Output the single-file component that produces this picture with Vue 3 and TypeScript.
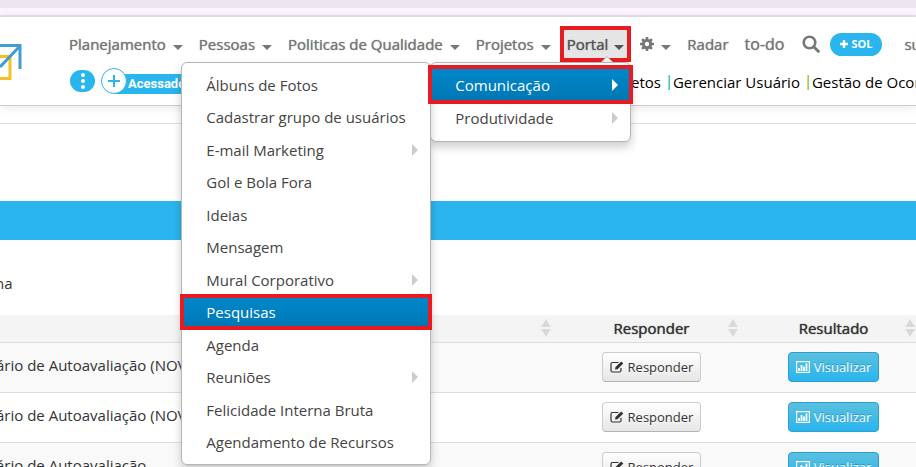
<script setup lang="ts">
interface MenuItem {
  label: string
  submenu?: boolean
  active?: boolean
}

const leadingMenus: string[] = ['Planejamento', 'Pessoas', 'Politicas de Qualidade', 'Projetos']

const portalItems: MenuItem[] = [
  { label: 'Comunicação', submenu: true, active: true },
  { label: 'Produtividade', submenu: true },
]

const communicationItems: MenuItem[] = [
  { label: 'Álbuns de Fotos' },
  { label: 'Cadastrar grupo de usuários' },
  { label: 'E-mail Marketing', submenu: true },
  { label: 'Gol e Bola Fora' },
  { label: 'Ideias' },
  { label: 'Mensagem' },
  { label: 'Mural Corporativo', submenu: true },
  { label: 'Pesquisas', active: true },
  { label: 'Agenda' },
  { label: 'Reuniões', submenu: true },
  { label: 'Felicidade Interna Bruta' },
  { label: 'Agendamento de Recursos' },
]

const surveys: string[] = ['ário de Autoavaliação (NOV', 'ário de Autoavaliação (NOV', 'ário de Autoavaliação']
</script>

<template>
  <div class="page">
    <div class="chrome"></div>
    <header class="header">
      <svg class="logo" viewBox="0 0 22 40" aria-hidden="true">
        <path d="M0 13.500H10V35.500H0" fill="none" stroke="#f6c022" stroke-width="3" />
        <path d="M0 2.500H20V26M20 3L0 24" fill="none" stroke="#3f9fd0" stroke-width="3" />
      </svg>
      <div class="bars">
        <nav class="nav">
          <a v-for="menu in leadingMenus" :key="menu" href="#" class="nav-item">{{ menu }}<i class="caret"></i></a>
          <div class="portal">
            <a href="#" class="nav-item open">Portal<i class="caret"></i></a>
            <i class="notch"></i>
            <div class="menu portal-menu">
              <a v-for="item in portalItems" :key="item.label" href="#" class="entry" :class="{ active: item.active }">
                {{ item.label }}<i v-if="item.submenu" class="arrow"></i>
              </a>
              <div class="menu side-menu">
                <a v-for="item in communicationItems" :key="item.label" href="#" class="entry" :class="{ active: item.active }">
                  {{ item.label }}<i v-if="item.submenu" class="arrow"></i>
                </a>
              </div>
            </div>
          </div>
          <a href="#" class="nav-item" aria-label="Configurações">
            <svg class="gear" viewBox="0 0 14 14" aria-hidden="true">
              <circle cx="7" cy="7" r="3.700" fill="none" stroke="currentColor" stroke-width="3" />
              <path d="M7 0V3M7 11V14M0 7H3M11 7H14M2.100 2.100L4 4M10 10L11.900 11.900M2.100 11.900L4 10M10 4L11.900 2.100" stroke="currentColor" stroke-width="2.600" />
            </svg><i class="caret"></i>
          </a>
          <a href="#" class="nav-item">Radar</a>
          <a href="#" class="nav-item todo">to-do</a>
          <button type="button" class="search" aria-label="Buscar">
            <svg viewBox="0 0 18 18" aria-hidden="true">
              <circle cx="7.500" cy="7.500" r="5.800" fill="none" stroke="currentColor" stroke-width="2.600" />
              <path d="M11.700 11.700L16.300 16.300" stroke="currentColor" stroke-width="3" stroke-linecap="round" />
            </svg>
          </button>
          <button type="button" class="sol">
            <svg viewBox="0 0 8 8" aria-hidden="true"><path d="M4 0V8M0 4H8" stroke="#fff" stroke-width="2.400" /></svg>SOL
          </button>
          <a href="#" class="support">su</a>
        </nav>
        <div class="shortcuts">
          <button type="button" class="more" aria-label="Mais opções">
            <svg viewBox="0 0 4 16" aria-hidden="true">
              <circle cx="2" cy="2" r="2" fill="#fff" /><circle cx="2" cy="8" r="2" fill="#fff" /><circle cx="2" cy="14" r="2" fill="#fff" />
            </svg>
          </button>
          <div class="accessed">
            <button type="button" class="add" aria-label="Adicionar">
              <svg viewBox="0 0 12 12" aria-hidden="true"><path d="M6 0V12M0 6H12" stroke="#29b5ee" stroke-width="2" /></svg>
            </button>
            <span class="accessed-label">Acessado</span>
          </div>
          <a href="#" class="shortcut">etos</a>
          <i class="divider"></i>
          <a href="#" class="shortcut">Gerenciar Usuário</a>
          <i class="divider warm"></i>
          <a href="#" class="shortcut">Gestão de Ocor</a>
        </div>
      </div>
    </header>

    <main class="main">
      <h1 class="title">s</h1>
      <div class="band"></div>
      <p class="field">na</p>
      <table class="grid">
        <colgroup><col /><col class="col-answer" /><col class="col-result" /></colgroup>
        <thead>
          <tr>
            <th v-for="(heading, i) in ['', 'Responder', 'Resultado']" :key="i" scope="col">
              <div class="heading">
                <span>{{ heading }}</span>
                <svg class="sort" viewBox="0 0 10 18" aria-hidden="true"><path d="M5 0L10 8H0ZM0 10H10L5 18Z" fill="#d9d9d9" /></svg>
              </div>
            </th>
          </tr>
        </thead>
        <tbody>
          <tr v-for="(survey, i) in surveys" :key="i">
            <td class="name">{{ survey }}</td>
            <td>
              <button type="button" class="btn">
                <svg viewBox="0 0 14 12" aria-hidden="true">
                  <path d="M11 7V9.500Q11 11 9.500 11H2.500Q1 11 1 9.500V3Q1 1.500 2.500 1.500H8.500" fill="none" stroke="currentColor" stroke-width="1.200" />
                  <path d="M5 8.500L5.500 6L11.200 0.500L13.300 2.500L7.500 8.200Z" fill="currentColor" />
                </svg>Responder
              </button>
            </td>
            <td>
              <button type="button" class="btn info">
                <svg viewBox="0 0 14 12" aria-hidden="true">
                  <rect x="0.600" y="0.600" width="12.800" height="10.800" fill="none" stroke="currentColor" stroke-width="1.200" />
                  <path d="M3 10V7M5.500 10V4M8 10V5.500M10.500 10V2.500" stroke="currentColor" stroke-width="1.800" />
                </svg>Visualizar
              </button>
            </td>
          </tr>
        </tbody>
      </table>
    </main>
  </div>
</template>

<style>
html,
body {
  overflow: hidden;
}
body {
  margin: 0;
}
</style>

<style scoped>
.page {
  height: 100vh;
  overflow: hidden;
  background: #fff;
  color: #333;
  font: 15px/20px 'Open Sans', sans-serif;
}
.page * {
  box-sizing: border-box;
}
a {
  color: inherit;
  text-decoration: none;
}
button {
  padding: 0;
  border: 0;
  background: none;
  color: inherit;
  font: inherit;
}
svg {
  display: block;
  flex: none;
}
.chrome {
  height: 17px;
  border-bottom: 2px solid #e8e0ee;
  background: linear-gradient(#ece6f1 8px, #fcf5fe 8px);
}
.header {
  position: relative;
  z-index: 2;
  display: flex;
  height: 89px;
  border-bottom: 1px solid #ccc;
  background: #fff;
  box-shadow: 0 1px 10px rgba(0, 0, 0, 0.1);
}
.logo {
  width: 22px;
  height: 40px;
  margin-top: 26px;
}
.bars {
  flex: 1;
  min-width: 0;
  padding: 9px 0 0 40px;
}
.nav {
  display: flex;
  align-items: center;
  gap: 2px;
  height: 36px;
  color: #777;
  text-shadow: 0 0 1px currentColor;
  white-space: nowrap;
}
.nav-item {
  display: flex;
  align-items: center;
  gap: 7px;
  height: 36px;
  padding: 0 3px;
  border: 4px solid transparent;
}
.caret {
  margin-top: 6px;
  border: 5px solid transparent;
  border-top-color: currentColor;
  border-bottom: 0;
}
.portal {
  position: relative;
}
.open {
  gap: 6px;
  border-color: #e81c20;
  background: #e5e5e5;
  color: #555;
}
.notch {
  position: absolute;
  right: 18px;
  bottom: 0;
  border: 6px solid transparent;
  border-top: 0;
  border-bottom-color: #bbb;
}
.notch::after {
  content: '';
  position: absolute;
  top: 1px;
  left: -5px;
  border: 5px solid transparent;
  border-top: 0;
  border-bottom-color: #f4f4f4;
}
.gear {
  width: 14px;
  height: 14px;
}
.todo {
  font-size: 16px;
}
.search {
  width: 18px;
  margin: 0 8px 0 9px;
}
.search svg {
  width: 18px;
  height: 18px;
}
.sol {
  display: flex;
  align-items: center;
  gap: 3px;
  height: 23px;
  padding: 0 10px;
  border-radius: 12px;
  background: #2bb5ee;
  color: #fff;
  font-size: 11px;
  font-weight: 700;
  text-shadow: none;
}
.sol svg {
  width: 8px;
}
.support {
  margin-left: 20px;
}
.menu {
  position: absolute;
  border: 1px solid #b5b5b5;
  border-radius: 6px;
  background: #fff;
  color: #444;
  text-shadow: none;
  box-shadow: 0 5px 10px rgba(0, 0, 0, 0.2);
}
.portal-menu {
  top: 36px;
  right: 0;
  width: 201px;
  padding: 5px 0 7px;
}
.side-menu {
  top: -1px;
  right: 199px;
  width: 250px;
  padding: 5px 0 6px;
}
.entry {
  display: flex;
  align-items: center;
  justify-content: space-between;
  height: 33px;
  padding: 0 12px 0 24px;
}
.side-menu .entry:nth-child(even) {
  height: 32px;
}
.active {
  outline: 4px solid #e81c20;
  outline-offset: -2px;
  background: linear-gradient(#0088cc, #0077b3);
  color: #fff;
}
.portal-menu > .active {
  position: relative;
  z-index: 1;
  outline-offset: -1px;
}
.arrow {
  border: 6px solid transparent;
  border-left-color: #ccc;
  border-right: 0;
}
.active .arrow {
  border-left-color: #fff;
}
.shortcuts {
  display: flex;
  align-items: center;
  height: 38px;
  padding-left: 8px;
  color: #000;
  white-space: nowrap;
}
.shortcut {
  padding-top: 2px;
}
.more {
  display: flex;
  flex: none;
  align-items: center;
  justify-content: center;
  width: 25px;
  height: 22px;
  border-radius: 12px;
  background: #29b5ee;
}
.more svg {
  width: 4px;
}
.accessed {
  display: flex;
  flex: none;
  align-items: center;
  width: 536px;
  padding-left: 6px;
}
.add {
  display: flex;
  align-items: center;
  justify-content: center;
  z-index: 1;
  width: 26px;
  height: 26px;
  border: 1px solid #29b5ee;
  border-radius: 50%;
  background: #fff;
}
.add svg {
  width: 12px;
}
.accessed-label {
  margin: 6px 0 0 -13px;
  padding: 0 14px;
  background: #29b5ee;
  color: #fff;
  font: 700 13px/20px Roboto, sans-serif;
}
.divider {
  flex: none;
  width: 2px;
  height: 15px;
  margin: 3px 3px 0 7px;
  background: linear-gradient(90deg, #a8e4b0 1px, #3cc8c0 1px);
}
.warm {
  background: linear-gradient(90deg, #ffcf40 1px, #6fd8a0 1px);
}
.main {
  margin-top: 17px;
  border-top: 1px solid #ddd;
}
.title {
  margin: 18px 0 31px -10px;
  color: #1b3f9c;
  font-size: 22px;
  font-weight: 400;
  line-height: 28px;
}
.band {
  height: 39px;
  background: #2bb5ee;
}
.field {
  margin: 33px 0 22px -5px;
}
.grid {
  width: calc(100% + 6px);
  border-collapse: collapse;
  table-layout: fixed;
}
.col-answer {
  width: 187px;
}
.col-result {
  width: 177px;
}
th,
td {
  height: 50px;
  padding: 0;
  border-bottom: 1px solid #ddd;
  text-align: center;
}
th {
  height: 27px;
  background: #f4f4f4;
  font-weight: 400;
  text-shadow: 0 0 1px currentColor;
}
.heading {
  display: grid;
  grid-template-columns: 1fr 24px;
  align-items: center;
  justify-items: center;
  padding-left: 24px;
}
.sort {
  width: 10px;
}
tbody tr:nth-child(odd) {
  background: #f9f9f9;
}
.name {
  padding-bottom: 4px;
  text-align: left;
  text-indent: -4px;
}
.btn {
  display: inline-flex;
  align-items: center;
  gap: 4px;
  height: 30px;
  padding: 0 7px;
  border: 1px solid #ccc;
  border-bottom-color: #b3b3b3;
  border-radius: 4px;
  background: linear-gradient(#fff, #e6e6e6);
  font-size: 13px;
  text-shadow: 0 1px 1px rgba(255, 255, 255, 0.75);
}
.btn svg {
  width: 14px;
}
.info {
  border-color: #2a9fd0;
  background: linear-gradient(#5bc0de, #29b5ee);
  color: #fff;
  text-shadow: 0 -1px 0 rgba(0, 0, 0, 0.25);
}
</style>
